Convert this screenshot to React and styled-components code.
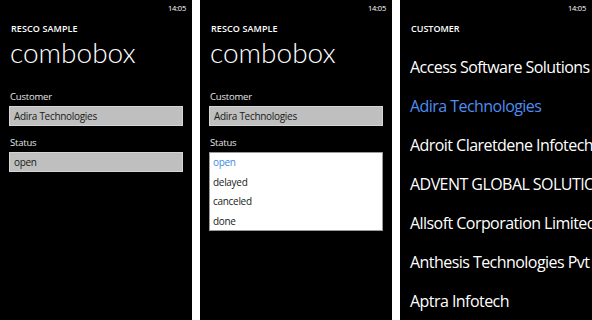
import styled, { createGlobalStyle } from "styled-components";

const GlobalStyle = createGlobalStyle`
  html, body {
    margin: 0;
    padding: 0;
    background: #fff;
  }
  body {
    font-family: "Open Sans", "Noto Sans", sans-serif;
  }
`;

const Screens = styled.div`
  display: flex;
  gap: 8px;
  width: 592px;
  height: 320px;
  background: #fff;
`;

const Phone = styled.div`
  width: 192px;
  height: 320px;
  background: #000;
  color: #fff;
  display: flex;
  flex-direction: column;
  overflow: hidden;
  box-sizing: border-box;
  padding-left: 10px;

  & > * {
    flex-shrink: 0;
  }
`;

const StatusBar = styled.div`
  height: 20px;
  padding: 3px 6px 0 0;
  box-sizing: border-box;
  text-align: right;
  font-size: 7.5px;
  line-height: 10px;
  letter-spacing: -0.2px;
`;

const AppTitle = styled.div`
  margin-top: 3px;
  padding-left: 1px;
  font-size: 9px;
  font-weight: 600;
  line-height: 12px;
  letter-spacing: 0.1px;
`;

const PageTitle = styled.div`
  margin-top: 1px;
  font-family: "Lato", "Open Sans", sans-serif;
  font-weight: 300;
  font-size: 28px;
  line-height: 32px;
`;

const Field = styled.div`
  margin-top: ${(p) => p.$top}px;
  padding-right: 9px;
`;

const Label = styled.div`
  font-size: 9.5px;
  line-height: 12px;
  letter-spacing: -0.2px;
  color: #e6e6e6;
  margin-bottom: 3px;
`;

const Box = styled.div`
  height: 20px;
  box-sizing: border-box;
  background: #bfbfbf;
  border: 1px solid #d4d4d4;
  color: #1a1a1a;
  font-size: 10px;
  line-height: 18px;
  letter-spacing: -0.3px;
  padding-left: 4px;
  margin-left: -1px;
`;

const DropList = styled.div`
  box-sizing: border-box;
  height: 79px;
  background: #fff;
  border: 1px solid #9a9a9a;
  margin-left: -1px;
  padding: 0 0 0 3px;
`;

const DropItem = styled.div`
  height: 19.5px;
  font-size: 10px;
  line-height: 19.5px;
  letter-spacing: -0.3px;
  color: ${(p) => (p.$active ? "#3d8ae8" : "#1a1a1a")};
`;

const ListHeader = styled.div`
  margin-top: 3px;
  padding-left: 1px;
  font-size: 9px;
  font-weight: 600;
  line-height: 12px;
`;

const List = styled.div`
  margin-top: 13px;
  display: flex;
  flex-direction: column;
`;

const ListItem = styled.div`
  height: 39px;
  font-size: 16px;
  line-height: 39px;
  letter-spacing: -0.55px;
  white-space: nowrap;
  color: ${(p) => (p.$active ? "#4d8ef0" : "#fff")};
`;

const statuses = ["open", "delayed", "canceled", "done"];

const customers = [
  "Access Software Solutions",
  "Adira Technologies",
  "Adroit Claretdene Infotech",
  "ADVENT GLOBAL SOLUTIONS",
  "Allsoft Corporation Limited",
  "Anthesis Technologies Pvt Ltd",
  "Aptra Infotech",
];

const Header = () => (
  <>
    <StatusBar>14:05</StatusBar>
    <AppTitle>RESCO SAMPLE</AppTitle>
    <PageTitle>combobox</PageTitle>
  </>
);

export default function App() {
  return (
    <>
      <GlobalStyle />
      <Screens>
        <Phone>
          <Header />
          <Field $top={23}>
            <Label>Customer</Label>
            <Box>Adira Technologies</Box>
          </Field>
          <Field $top={11}>
            <Label>Status</Label>
            <Box>open</Box>
          </Field>
        </Phone>
        <Phone>
          <Header />
          <Field $top={23}>
            <Label>Customer</Label>
            <Box>Adira Technologies</Box>
          </Field>
          <Field $top={11}>
            <Label>Status</Label>
            <DropList>
              {statuses.map((s, i) => (
                <DropItem key={s} $active={i === 0}>
                  {s}
                </DropItem>
              ))}
            </DropList>
          </Field>
        </Phone>
        <Phone>
          <StatusBar>14:05</StatusBar>
          <ListHeader>CUSTOMER</ListHeader>
          <List>
            {customers.map((c, i) => (
              <ListItem key={c} $active={i === 1}>
                {c}
              </ListItem>
            ))}
          </List>
        </Phone>
      </Screens>
    </>
  );
}
